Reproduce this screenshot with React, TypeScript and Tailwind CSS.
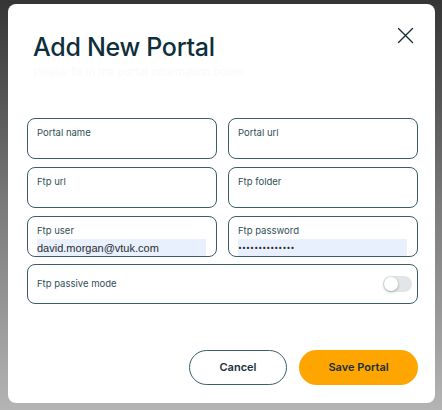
import { useState } from "react";

const Field = ({
  label,
  value,
  secret,
}: {
  label: string;
  value?: string;
  secret?: boolean;
}) => (
  <div className="h-[41px] rounded-[8px] border border-[#3b5d66] pl-[9px] pr-[10px] pt-[8px] flex flex-col">
    <span className="text-[9.5px] leading-[12px] text-[#2f4f58]">{label}</span>
    {value !== undefined && (
      <div className="mt-[2px] h-[19px] flex items-center bg-[#e8f0fe]">
        {secret ? (
          <span className="text-[7px] leading-[10px] tracking-[0.1px] text-[#2b2b2b] mt-[1px]">
            {value}
          </span>
        ) : (
          <span
            className="text-[11px] leading-[16px] text-[#2b2b2b]"
            style={{ fontFamily: "'Liberation Sans', Arial, sans-serif" }}
          >
            {value}
          </span>
        )}
      </div>
    )}
  </div>
);

const App: React.FC = () => {
  const [passive, setPassive] = useState(false);

  return (
    <div
      className="w-[442px] h-[410px] bg-gradient-to-b from-[#353535] via-[#7a7a7a] to-[#b4b4b4] pt-[4px] pl-[8px] pr-[7px] pb-[7px]"
      style={{ fontFamily: "Inter, 'Noto Sans', sans-serif" }}
    >
      <div className="h-full bg-white rounded-[8px] flex flex-col pl-[19px] pr-[17px]">
        {/* Header */}
        <div className="flex items-start justify-between pt-[28px]">
          <div>
            <h1 className="text-[25px] leading-[30px] font-medium text-[#0f2f3a] ml-[6px] tracking-[-0.3px]">
              Add New Portal
            </h1>
            <p className="text-[11px] leading-[14px] text-[#fafafa] ml-[6px] mt-[3px]">
              Please fill in the portal information below
            </p>
          </div>
          <button className="mt-[-5px] mr-[4px] text-[#16303a]">
            <svg width="17" height="17" viewBox="0 0 17 17" fill="none">
              <path
                d="M1.5 1.5l14 14M15.5 1.5l-14 14"
                stroke="currentColor"
                strokeWidth={1.4}
                strokeLinecap="round"
              />
            </svg>
          </button>
        </div>

        {/* Form */}
        <div className="grid grid-cols-2 gap-x-[11px] gap-y-[8px] mt-[39px]">
          <Field label="Portal name" />
          <Field label="Portal url" />
          <Field label="Ftp url" />
          <Field label="Ftp folder" />
          <Field label="Ftp user" value="david.morgan@vtuk.com" />
          <Field label="Ftp password" value="••••••••••••••" secret />
        </div>

        <div className="mt-[7px] h-[40px] rounded-[8px] border border-[#3b5d66] pl-[9px] pr-[5px] flex items-center justify-between">
          <span className="text-[9.5px] text-[#2f4f58]">Ftp passive mode</span>
          <button
            onClick={() => setPassive((p) => !p)}
            className={`w-[29px] h-[16px] rounded-full p-[1px] flex items-center transition-colors ${
              passive ? "bg-[#ffa500] justify-end" : "bg-[#e3e6e8] justify-start"
            }`}
          >
            <span className="w-[14px] h-[14px] rounded-full bg-white shadow-[0_1px_3px_rgba(0,0,0,0.3)]" />
          </button>
        </div>

        {/* Actions */}
        <div className="flex justify-end gap-[12px] mt-[46px]">
          <button className="w-[98px] h-[35px] rounded-full border border-[#3b5d66] text-[11px] font-semibold text-[#16303a]">
            Cancel
          </button>
          <button className="w-[119px] h-[35px] rounded-full bg-[#ffa500] text-[11px] font-semibold text-[#16303a]">
            Save Portal
          </button>
        </div>
      </div>
    </div>
  );
};

export default App;
